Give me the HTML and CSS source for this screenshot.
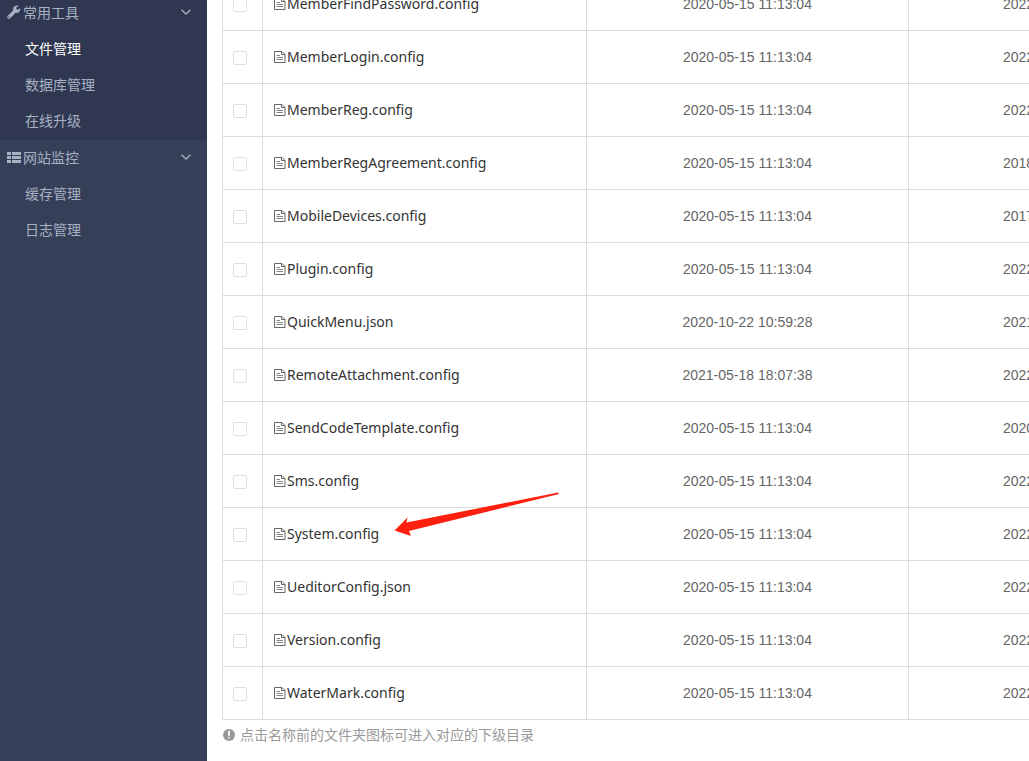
FILE: index.html
```html
<!DOCTYPE html>
<html lang="zh-CN">
<head>
    <meta charset="UTF-8">
    <meta name="viewport" content="width=device-width, initial-scale=1.0">
    <title>文件管理</title>
    <link rel="stylesheet" href="styles.css">
</head>
<body>
    <svg class="symbols" aria-hidden="true">
        <symbol id="icon-file" viewBox="0 0 12 14">
            <path d="M0.5 1.5H8L11 4.5V12.5H0.5Z M7.5 1.5V4.5H11" fill="none" stroke="currentColor"/>
            <path d="M2.5 5.5H6 M2.5 7.5H9 M2.5 9.5H9" fill="none" stroke="currentColor" stroke-opacity="0.8"/>
        </symbol>
        <symbol id="icon-down" viewBox="0 0 10 6">
            <path d="M0.5 0.8L5 5L9.5 0.8" fill="none" stroke="currentColor" stroke-width="1.3"/>
        </symbol>
    </svg>

    <nav class="sidebar">
        <section class="menu open">
            <button type="button" class="menu-title">
                <svg class="menu-icon" viewBox="0 0 14 14"><path d="M13.3 3.2L10.8 4.8L9.3 3.9L9.3 2.6L11.7 0.8C9.5 0 6.8 0.9 6.2 3.2C6 4 6.1 4.7 6.3 5.3L0.8 10.7C0 11.5 0 12.5 0.7 13.2C1.4 13.9 2.5 13.9 3.2 13.2L8.7 7.8C11.4 8.4 13.8 6 13.3 3.2ZM2 12.6A0.7 0.7 0 1 1 2 11.2A0.7 0.7 0 0 1 2 12.6Z" fill="currentColor"/></svg>
                <span>常用工具</span>
                <svg class="menu-arrow"><use href="#icon-down"/></svg>
            </button>
            <a href="#" class="active">文件管理</a>
            <a href="#">数据库管理</a>
            <a href="#">在线升级</a>
        </section>
        <section class="menu">
            <button type="button" class="menu-title">
                <svg class="menu-icon" viewBox="0 0 14 14"><path d="M0 2H4V5H0ZM5 2H14V5H5ZM0 6H4V9H0ZM5 6H14V9H5ZM0 10H4V13H0ZM5 10H14V13H5Z" fill="currentColor"/></svg>
                <span>网站监控</span>
                <svg class="menu-arrow"><use href="#icon-down"/></svg>
            </button>
            <a href="#">缓存管理</a>
            <a href="#">日志管理</a>
        </section>
    </nav>

    <main class="content">
        <table class="files">
            <colgroup>
                <col class="col-check">
                <col class="col-name">
                <col>
                <col>
            </colgroup>
            <tbody>
                <tr>
                    <td class="check"><input type="checkbox" aria-label="MemberFindPassword.config"></td>
                    <td class="name"><a href="#"><svg><use href="#icon-file"/></svg>MemberFindPassword.config</a></td>
                    <td class="time">2020-05-15 11:13:04</td>
                    <td class="modified">2022</td>
                </tr>
                <tr>
                    <td class="check"><input type="checkbox" aria-label="MemberLogin.config"></td>
                    <td class="name"><a href="#"><svg><use href="#icon-file"/></svg>MemberLogin.config</a></td>
                    <td class="time">2020-05-15 11:13:04</td>
                    <td class="modified">2022</td>
                </tr>
                <tr>
                    <td class="check"><input type="checkbox" aria-label="MemberReg.config"></td>
                    <td class="name"><a href="#"><svg><use href="#icon-file"/></svg>MemberReg.config</a></td>
                    <td class="time">2020-05-15 11:13:04</td>
                    <td class="modified">2022</td>
                </tr>
                <tr>
                    <td class="check"><input type="checkbox" aria-label="MemberRegAgreement.config"></td>
                    <td class="name"><a href="#"><svg><use href="#icon-file"/></svg>MemberRegAgreement.config</a></td>
                    <td class="time">2020-05-15 11:13:04</td>
                    <td class="modified">2018</td>
                </tr>
                <tr>
                    <td class="check"><input type="checkbox" aria-label="MobileDevices.config"></td>
                    <td class="name"><a href="#"><svg><use href="#icon-file"/></svg>MobileDevices.config</a></td>
                    <td class="time">2020-05-15 11:13:04</td>
                    <td class="modified">2017</td>
                </tr>
                <tr>
                    <td class="check"><input type="checkbox" aria-label="Plugin.config"></td>
                    <td class="name"><a href="#"><svg><use href="#icon-file"/></svg>Plugin.config</a></td>
                    <td class="time">2020-05-15 11:13:04</td>
                    <td class="modified">2022</td>
                </tr>
                <tr>
                    <td class="check"><input type="checkbox" aria-label="QuickMenu.json"></td>
                    <td class="name"><a href="#"><svg><use href="#icon-file"/></svg>QuickMenu.json</a></td>
                    <td class="time">2020-10-22 10:59:28</td>
                    <td class="modified">2021</td>
                </tr>
                <tr>
                    <td class="check"><input type="checkbox" aria-label="RemoteAttachment.config"></td>
                    <td class="name"><a href="#"><svg><use href="#icon-file"/></svg>RemoteAttachment.config</a></td>
                    <td class="time">2021-05-18 18:07:38</td>
                    <td class="modified">2022</td>
                </tr>
                <tr>
                    <td class="check"><input type="checkbox" aria-label="SendCodeTemplate.config"></td>
                    <td class="name"><a href="#"><svg><use href="#icon-file"/></svg>SendCodeTemplate.config</a></td>
                    <td class="time">2020-05-15 11:13:04</td>
                    <td class="modified">2020</td>
                </tr>
                <tr>
                    <td class="check"><input type="checkbox" aria-label="Sms.config"></td>
                    <td class="name"><a href="#"><svg><use href="#icon-file"/></svg>Sms.config</a></td>
                    <td class="time">2020-05-15 11:13:04</td>
                    <td class="modified">2022</td>
                </tr>
                <tr>
                    <td class="check"><input type="checkbox" aria-label="System.config"></td>
                    <td class="name">
                        <a href="#"><svg><use href="#icon-file"/></svg>System.config</a>
                        <svg class="pointer" viewBox="0 0 166 46"><path d="M0.5 38.5L13.5 25.5L12.5 30.5L164 0.5L165 2L15 39L17 44Z" fill="#ff2010"/></svg>
                    </td>
                    <td class="time">2020-05-15 11:13:04</td>
                    <td class="modified">2022</td>
                </tr>
                <tr>
                    <td class="check"><input type="checkbox" aria-label="UeditorConfig.json"></td>
                    <td class="name"><a href="#"><svg><use href="#icon-file"/></svg>UeditorConfig.json</a></td>
                    <td class="time">2020-05-15 11:13:04</td>
                    <td class="modified">2022</td>
                </tr>
                <tr>
                    <td class="check"><input type="checkbox" aria-label="Version.config"></td>
                    <td class="name"><a href="#"><svg><use href="#icon-file"/></svg>Version.config</a></td>
                    <td class="time">2020-05-15 11:13:04</td>
                    <td class="modified">2022</td>
                </tr>
                <tr>
                    <td class="check"><input type="checkbox" aria-label="WaterMark.config"></td>
                    <td class="name"><a href="#"><svg><use href="#icon-file"/></svg>WaterMark.config</a></td>
                    <td class="time">2020-05-15 11:13:04</td>
                    <td class="modified">2022</td>
                </tr>
            </tbody>
        </table>
        <p class="tip">
            <svg viewBox="0 0 12 12"><circle cx="6" cy="6" r="6" fill="currentColor"/><path d="M5 2H7L6.7 7H5.3ZM5.2 8H6.8V9.5H5.2Z" fill="#fff"/></svg>
            点击名称前的文件夹图标可进入对应的下级目录
        </p>
    </main>
</body>
</html>
```
FILE: styles.css
```css
* {
    box-sizing: border-box;
}
body {
    display: flex;
    height: 100vh;
    margin: 0;
    overflow: hidden;
    background: #fff;
    font-family: "Liberation Sans", "Noto Sans CJK SC", sans-serif;
    font-size: 14px;
}
a {
    text-decoration: none;
}
.symbols {
    position: absolute;
    width: 0;
    height: 0;
}

/* sidebar */
.sidebar {
    flex: none;
    width: 207px;
    background: #353f57;
    overflow: hidden;
}
.menu {
    color: #a7b1c2;
}
.menu.open {
    margin-top: -5px;
    padding-bottom: 1px;
    background: #2f3850;
}
.menu-title {
    display: flex;
    align-items: center;
    gap: 2px;
    width: 100%;
    height: 36px;
    padding: 0 16px 2px 7px;
    border: none;
    background: none;
    color: inherit;
    font: inherit;
    cursor: pointer;
}
.menu-icon {
    width: 14px;
    height: 14px;
}
.menu-arrow {
    width: 10px;
    height: 6px;
    margin-left: auto;
}
.menu a {
    display: block;
    padding-left: 25px;
    line-height: 36px;
    color: inherit;
}
.menu a.active {
    color: #fff;
}

/* file list, scrolled down to its last rows */
.content {
    display: flex;
    flex: 1;
    flex-direction: column;
    justify-content: flex-end;
    min-width: 0;
    padding: 0 0 16px 15px;
    overflow: hidden;
}
.files {
    flex: none;
    width: 125%;
    table-layout: fixed;
    border-collapse: collapse;
}
.col-check {
    width: 40px;
}
.col-name {
    width: 324px;
}
.files td {
    height: 53px;
    padding: 0;
    border: 1px solid #dcdcdc;
    color: #666;
}
.files .check {
    padding: 2px 0 0 10px;
}
.check input {
    display: block;
    appearance: none;
    width: 14px;
    height: 14px;
    margin: 0;
    border: 1px solid #dcdfe8;
    border-radius: 2px;
    background: #fff;
}
.files .name {
    position: relative;
    padding-left: 11px;
}
.name a {
    display: flex;
    align-items: center;
    gap: 1px;
    color: #333;
    font-family: "Noto Sans", sans-serif;
    line-height: 20px;
}
.name a svg {
    width: 12px;
    height: 14px;
    color: #666;
}
.pointer {
    position: absolute;
    top: -16px;
    left: 131px;
    width: 166px;
    height: 46px;
}
.files .time {
    text-align: center;
}
.files .modified {
    padding-left: 94px;
}
.tip {
    display: flex;
    flex: none;
    align-items: center;
    gap: 5px;
    margin: 5px 0 0 1px;
    color: #999;
    line-height: 20px;
}
.tip svg {
    width: 12px;
    height: 12px;
}
```
